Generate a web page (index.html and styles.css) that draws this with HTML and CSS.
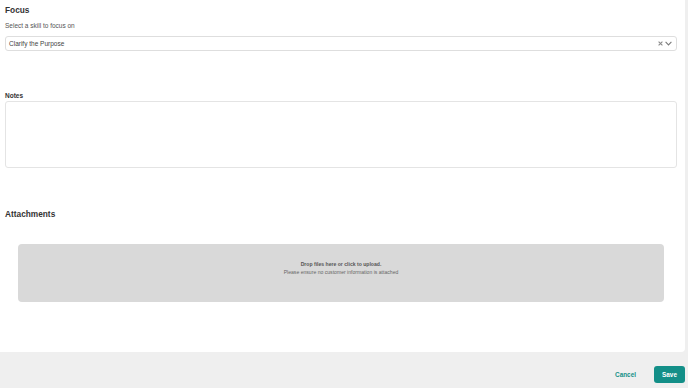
FILE: index.html
```
<!DOCTYPE html>
<html lang="en">

<head>
  <meta charset="UTF-8" />
  <title>Focus</title>
  <link rel="stylesheet" href="styles.css">
</head>

<body>
  <div class="panel">
    <h2 class="title">Focus</h2>
    <div class="hint">Select a skill to focus on</div>

    <!-- skill picker -->
    <div class="picker">
      <span class="picker-value">Clarify the Purpose</span>
      <span class="picker-icons">
        <svg class="clear" width="5" height="5" viewBox="0 0 5 5">
          <path d="M0.6 0.6 L4.4 4.4 M4.4 0.6 L0.6 4.4" stroke="#8a8a8a" stroke-width="1.1" />
        </svg>
        <svg class="chevron" width="7" height="5" viewBox="0 0 7 5">
          <path d="M0.6 0.9 L3.5 3.9 L6.4 0.9" stroke="#7a7a7a" stroke-width="1.1" fill="none" />
        </svg>
      </span>
    </div>

    <label class="notes-label" for="notes">Notes</label>
    <textarea id="notes" class="notes"></textarea>

    <h2 class="title attach-title">Attachments</h2>
    <div class="dropzone">
      <div class="drop-main">Drop files here or click to upload.</div>
      <div class="drop-sub">Please ensure no customer information is attached</div>
    </div>
  </div>

  <div class="footer">
    <button class="btn-cancel">Cancel</button>
    <button class="btn-save">Save</button>
  </div>
</body>

</html>
```

FILE: styles.css
```
:root {
  --bg: #efefef;
  --text: #333333;
  --teal: #138f88;
  --line: #dedede;
}
* {
  box-sizing: border-box;
  margin: 0;
  padding: 0;
}
body {
  background: var(--bg);
  color: var(--text);
  font-family: "Liberation Sans", Arial, sans-serif;
  width: 688px;
  height: 388px;
  overflow: hidden;
}
.panel {
  width: 685px;
  height: 352px;
  background: #fff;
  border-bottom-right-radius: 4px;
  padding: 5px 8px 0 5px;
}
.title {
  font-size: 8.3px;
  line-height: 10px;
  font-weight: bold;
}
.hint {
  margin-top: 7px;
  font-size: 6.5px;
  line-height: 8px;
  color: #555;
}
/* skill picker */
.picker {
  margin-top: 6px;
  height: 15px;
  border: 1px solid var(--line);
  border-radius: 3px;
  display: flex;
  align-items: center;
  justify-content: space-between;
  padding: 0 4px 0 3px;
}
.picker-value {
  font-size: 6.5px;
  color: #444;
}
.picker-icons {
  display: flex;
  align-items: center;
  gap: 2px;
}
.clear,
.chevron {
  display: block;
}
.notes-label {
  display: block;
  margin-top: 41px;
  font-size: 6.5px;
  line-height: 8px;
  font-weight: bold;
}
.notes {
  display: block;
  width: 100%;
  height: 67px;
  margin-top: 1px;
  border: 1px solid #e4e4e4;
  border-radius: 3px;
  resize: none;
  background: #fff;
}
.attach-title {
  margin-top: 41px;
}
.dropzone {
  margin: 25px 13px 0;
  height: 58px;
  background: #d9d9d9;
  border-radius: 4px;
  padding-top: 17px;
  text-align: center;
  font-size: 5.1px;
  line-height: 7.8px;
  color: #555;
}
.drop-main {
  font-weight: bold;
  color: #555;
}
.drop-sub {
  color: #666;
}
/* footer buttons */
.footer {
  height: 36px;
  display: flex;
  justify-content: flex-end;
  align-items: center;
  padding: 8px 3px 0 0;
  gap: 10px;
}
.btn-cancel {
  background: none;
  border: none;
  color: var(--teal);
  font-family: inherit;
  font-size: 6.4px;
  font-weight: bold;
  padding: 0 8px;
  cursor: pointer;
}
.btn-save {
  width: 31px;
  height: 17px;
  background: var(--teal);
  color: #fff;
  border: none;
  border-radius: 3px;
  font-family: inherit;
  font-size: 6.4px;
  font-weight: bold;
  cursor: pointer;
}
```
